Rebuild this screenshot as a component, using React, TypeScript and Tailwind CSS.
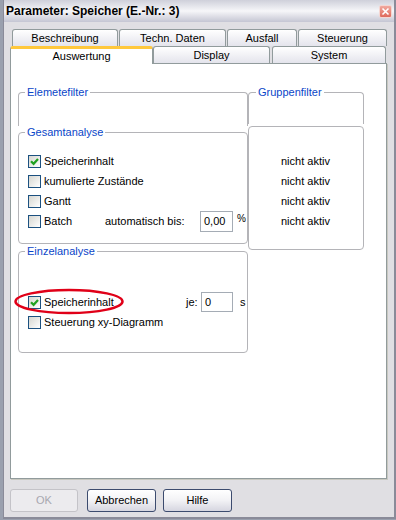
import React from "react"

const Check = ({ checked }: { checked?: boolean }) => (
  <span className="w-[13px] h-[13px] shrink-0 border border-[#1c5180] bg-linear-to-br from-[#d6d6d0] to-white flex items-center justify-center">
    {checked && (
      <svg width="9" height="9" viewBox="0 0 9 9">
        <path d="M1 4.2 L3.6 6.8 L8 2" stroke="#21a121" strokeWidth="2.2" fill="none" />
      </svg>
    )}
  </span>
)

const Tab = ({ label, w, selected }: { label: string; w: string; selected?: boolean }) =>
  selected ? (
    <div className={`${w} h-[18px] -mb-px relative z-10 bg-white border-x border-[#919b9c] border-t-[3px] border-t-[#ffc83c] rounded-t-[3px] flex items-center justify-center`}>
      {label}
    </div>
  ) : (
    <div className={`${w} h-[17px] border border-b-0 border-[#919b9c] rounded-t-[3px] bg-linear-to-b from-white to-[#e4e4ec] flex items-center justify-center`}>
      {label}
    </div>
  )

const Row = ({ children }: { children: React.ReactNode }) => (
  <div className="h-[20px] flex items-center gap-[3px]">{children}</div>
)

export default function App() {
  return (
    <div className="w-[396px] h-[520px] bg-[#9aa0ae] font-['Liberation_Sans',Arial,sans-serif] text-[11px] text-black">
      <div className="ml-[3px] w-[393px] h-[519px] bg-[#e0dfe3] border-l border-r-2 border-b-2 border-[#8a8b99] flex flex-col">
        {/* title bar */}
        <div className="h-[22px] shrink-0 flex items-center justify-between pl-[2px] pr-[2px] bg-linear-to-b from-[#cfd0da] via-[#f6f6f9] to-[#c5c6d3]">
          <span className="font-bold text-[12px]">Parameter: Speicher (E.-Nr.: 3)</span>
          <span className="w-[13px] h-[13px] rounded-[2px] border border-[#f4d6d2] bg-linear-to-b from-[#f0a89e] to-[#de6a5c] flex items-center justify-center">
            <svg width="9" height="9" viewBox="0 0 9 9">
              <path d="M1.5 1.5 L7.5 7.5 M7.5 1.5 L1.5 7.5" stroke="white" strokeWidth="1.6" />
            </svg>
          </span>
        </div>

        <div className="pl-[6px] pt-[7px] flex flex-col">
          {/* tabs */}
          <div className="flex gap-px pl-[2px]">
            <Tab label="Beschreibung" w="w-[106px]" />
            <Tab label="Techn. Daten" w="w-[107px]" />
            <Tab label="Ausfall" w="w-[70px]" />
            <Tab label="Steuerung" w="w-[89px]" />
          </div>
          <div className="flex items-end h-[17px]">
            <Tab label="Auswertung" w="w-[143px]" selected />
            <Tab label="Display" w="w-[117px]" />
            <div className="w-[2px]" />
            <Tab label="System" w="w-[114px]" />
          </div>

          {/* panel */}
          <div className="relative w-[377px] h-[416px] border border-[#919b9c] shadow-[1px_1px_0_#c8c8c0] bg-white pl-[7px] pt-[22px] flex">
            <div className="w-[230px] flex flex-col">
              <fieldset className="h-[40px] border border-b-0 border-[#b4b4b8] rounded-t-[4px]">
                <legend className="ml-[6px] px-[2px] leading-[13px] text-[#0a46c8]">Elemetefilter</legend>
              </fieldset>
              <fieldset className="h-[118px] border border-[#b4b4b8] rounded-[4px]">
                <legend className="ml-[6px] px-[2px] leading-[13px] text-[#0a46c8]">Gesamtanalyse</legend>
                <div className="pl-[9px] pt-[12px]">
                  <Row>
                    <Check checked />
                    <span>Speicherinhalt</span>
                  </Row>
                  <Row>
                    <Check />
                    <span>kumulierte Zustände</span>
                  </Row>
                  <Row>
                    <Check />
                    <span>Gantt</span>
                  </Row>
                  <div className="h-[20px] flex items-center">
                    <div className="w-[77px] flex items-center gap-[3px]">
                      <Check />
                      <span>Batch</span>
                    </div>
                    <span className="w-[95px]">automatisch bis:</span>
                    <div className="w-[33px] h-[21px] shrink-0 border border-[#a5acb5] px-[3px] flex items-center">0,00</div>
                    <span className="ml-[4px] mb-[6px] text-[10px]">%</span>
                  </div>
                </div>
              </fieldset>
              <fieldset className="h-[108px] mt-px border border-[#b4b4b8] rounded-[4px]">
                <legend className="ml-[6px] px-[2px] leading-[13px] text-[#0a46c8]">Einzelanalyse</legend>
                <div className="pl-[9px] pt-[34px]">
                  <div className="relative h-[20px] flex items-center">
                    <svg className="absolute left-[-14px] top-[-4px]" width="110" height="27" viewBox="0 0 110 27">
                      <ellipse cx="55" cy="13.5" rx="53.5" ry="11.5" stroke="#e00018" strokeWidth="2.5" fill="none" />
                    </svg>
                    <div className="w-[158px] flex items-center gap-[3px]">
                      <Check checked />
                      <span>Speicherinhalt</span>
                    </div>
                    <span className="w-[15px]">je:</span>
                    <div className="w-[32px] h-[20px] shrink-0 border border-[#a5acb5] px-[3px] flex items-center">0</div>
                    <span className="ml-[7px]">s</span>
                  </div>
                  <Row>
                    <Check />
                    <span>Steuerung xy-Diagramm</span>
                  </Row>
                </div>
              </fieldset>
            </div>

            <div className="w-[116px] flex flex-col">
              <fieldset className="h-[38px] border border-b-0 border-[#b4b4b8] rounded-t-[4px]">
                <legend className="ml-[7px] px-[2px] leading-[13px] text-[#0a46c8]">Gruppenfilter</legend>
              </fieldset>
              <div className="h-[124px] mt-[2px] border border-[#b4b4b8] rounded-[4px] pl-[32px] pt-[24px]">
                <div className="h-[20px] flex items-center">nicht aktiv</div>
                <div className="h-[20px] flex items-center">nicht aktiv</div>
                <div className="h-[20px] flex items-center">nicht aktiv</div>
                <div className="h-[20px] flex items-center">nicht aktiv</div>
              </div>
            </div>
          </div>

          {/* buttons */}
          <div className="flex mt-[10px]">
            <button className="w-[68px] h-[23px] rounded-[3px] border border-[#c4c3c8] bg-[#ecebee] text-[#a8a7b0]">OK</button>
            <button className="w-[69px] h-[23px] ml-[9px] rounded-[3px] border border-[#3c4b6e] bg-linear-to-b from-white via-[#f2f2f5] to-[#d6d6e0]">Abbrechen</button>
            <button className="w-[69px] h-[23px] ml-[7px] rounded-[3px] border border-[#3c4b6e] bg-linear-to-b from-white via-[#f2f2f5] to-[#d6d6e0]">Hilfe</button>
          </div>
        </div>
      </div>
    </div>
  )
}
